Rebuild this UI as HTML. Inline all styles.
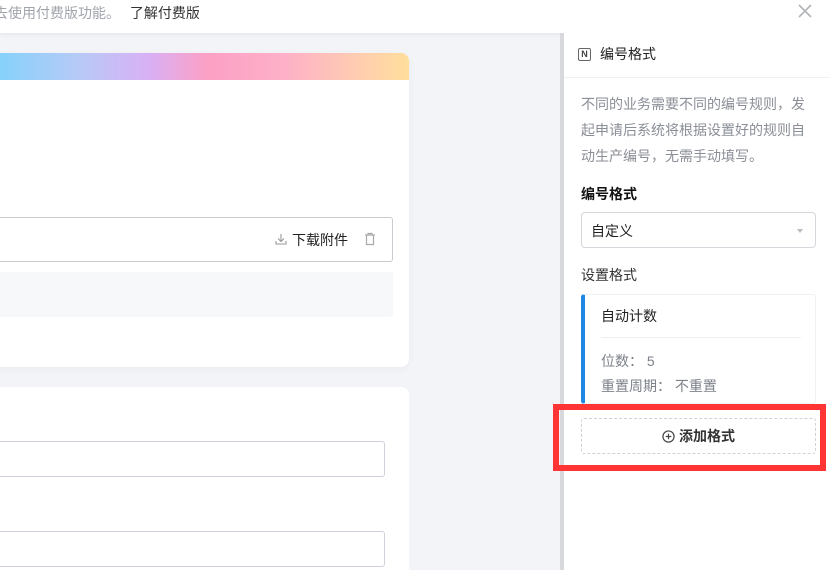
<!DOCTYPE html>
<html><head><meta charset="utf-8"><style>
*{box-sizing:border-box;margin:0;padding:0}
html,body{width:830px;height:570px;overflow:hidden}
body{background:#f3f4f7;font-family:"Liberation Sans","Noto Sans CJK SC",sans-serif;position:relative;font-size:14px;color:#1f2329}
.abs{position:absolute}
</style></head><body>
<div class="abs" style="left:0;top:0;width:830px;height:33px;background:#fff;box-shadow:0 2px 4px rgba(0,0,0,.05)">
 <div class="abs" style="left:-6px;top:3px;font-size:14px;color:#a0a4ab;white-space:nowrap">去使用付费版功能。 <span style="color:#333;margin-left:6px">了解付费版</span></div>
 <svg class="abs" style="left:798px;top:4px" width="14" height="14" viewBox="0 0 14 14"><path d="M1 1L13 13M13 1L1 13" stroke="#b0b3b8" stroke-width="1.6"/></svg>
</div>
<div class="abs" style="left:-10px;top:53px;width:419px;height:314px;background:#fff;border-radius:8px;overflow:hidden;box-shadow:0 2px 8px rgba(0,0,0,.04)">
 <div style="height:27px;background:linear-gradient(90deg,#7fd3fb 0%,#b9c9f7 22%,#d9b0f5 38%,#fca0c4 52%,#fdb0c8 70%,#ffcdb0 88%,#ffde9c 100%)"></div>
 <div class="abs" style="left:0;top:164px;width:403px;height:45px;border:1px solid #c9cbd1;border-radius:3px"></div>
 <svg class="abs" style="left:285px;top:180px" width="12" height="12" viewBox="0 0 12 12"><path d="M6 1V8M3 5.5L6 8.5L9 5.5M1 8V11H11V8" stroke="#999" fill="none" stroke-width="1.1"/></svg>
 <div class="abs" style="left:302px;top:177px;font-size:14px;color:#222;white-space:nowrap">下载附件</div>
 <svg class="abs" style="left:373px;top:179px" width="14" height="14" viewBox="0 0 14 14"><path d="M2 3H12M5 3V1.5H9V3M3.5 3V12.5H10.5V3" stroke="#aaa" fill="none" stroke-width="1.2"/></svg>
 <div class="abs" style="left:0;top:219px;width:403px;height:45px;background:#f7f8fa;border-radius:3px"></div>
</div>
<div class="abs" style="left:-10px;top:387px;width:419px;height:200px;background:#fff;border-radius:8px">
 <div class="abs" style="left:0;top:54px;width:395px;height:36px;border:1px solid #cfd2da;border-radius:3px"></div>
 <div class="abs" style="left:0;top:144px;width:395px;height:36px;border:1px solid #cfd2da;border-radius:3px"></div>
</div>
<div class="abs" style="left:560px;top:33px;width:4px;height:537px;background:#d8d9dc"></div>
<div class="abs" style="left:564px;top:33px;width:266px;height:537px;background:#fff">
 <div style="height:45px;border-bottom:1px solid #f0f0f0;position:relative">
  <div class="abs" style="left:14px;top:15px;width:13px;height:13px;border:1.2px solid #666;border-radius:2px;font-size:9px;line-height:11px;text-align:center;color:#444;font-weight:bold">N</div>
  <div class="abs" style="left:36px;top:11px;font-size:14px;color:#222">编号格式</div>
 </div>
 <div class="abs" style="left:17px;top:58px;width:228px;font-size:14px;line-height:26px;color:#8a8e96">不同的业务需要不同的编号规则，发起申请后系统将根据设置好的规则自动生产编号，无需手动填写。</div>
 <div class="abs" style="left:17px;top:151px;font-size:14px;font-weight:bold;color:#111">编号格式</div>
 <div class="abs" style="left:17px;top:179px;width:235px;height:36px;border:1px solid #d5d7dc;border-radius:4px">
  <div class="abs" style="left:9px;top:8px;font-size:14px;color:#222">自定义</div>
  <div class="abs" style="right:12px;top:16px;width:0;height:0;border-left:3px solid transparent;border-right:3px solid transparent;border-top:4px solid #bbb"></div>
 </div>
 <div class="abs" style="left:17px;top:232px;font-size:14px;color:#333">设置格式</div>
 <div class="abs" style="left:17px;top:261px;width:235px;height:110px;border:1px solid #f0f1f3;border-left:4px solid #1e88e5;border-radius:3px">
  <div class="abs" style="left:16px;top:11px;font-size:14px;color:#222">自动计数</div>
  <div class="abs" style="left:16px;top:42px;width:200px;height:1px;background:#f0f0f0"></div>
  <div class="abs" style="left:16px;top:56px;font-size:14px;color:#7d828a">位数： 5</div>
  <div class="abs" style="left:16px;top:81px;font-size:14px;color:#7d828a">重置周期： 不重置</div>
 </div>
 <div class="abs" style="left:17px;top:385px;width:235px;height:36px;border:1px dashed #cfd1d8;border-radius:3px;background:#fff;text-align:center;line-height:34px;font-size:14px;font-weight:bold;color:#333"><svg width="13" height="13" viewBox="0 0 14 14" style="vertical-align:-2px;margin-right:4px"><circle cx="7" cy="7" r="6" stroke="#444" stroke-width="1.3" fill="none"/><path d="M7 4V10M4 7H10" stroke="#444" stroke-width="1.3"/></svg>添加格式</div>
</div>
<div class="abs" style="left:553px;top:404px;width:273px;height:67px;border:6px solid #ff3535"></div>
</body></html>
